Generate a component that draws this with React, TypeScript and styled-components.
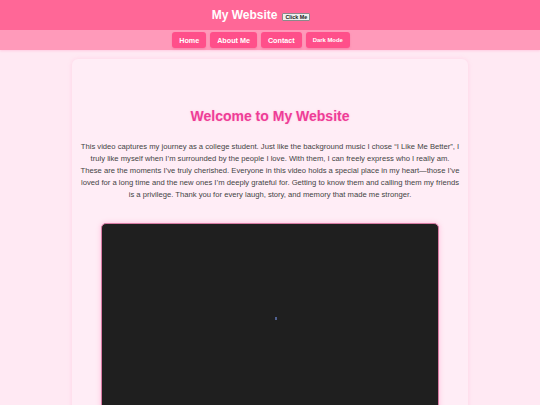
import React from "react";
import styled, { createGlobalStyle } from "styled-components";

const GlobalStyle = createGlobalStyle`
  html, body {
    margin: 0;
    padding: 0;
  }
  body {
    background-color: #ffe9f3;
    font-family: "Liberation Sans", Arial, sans-serif;
  }
`;

const Header = styled.header`
  height: 30px;
  background-color: #ff6797;
  display: flex;
  align-items: center;
  justify-content: center;
  gap: 5px;
  padding-right: 18px;
`;

const Title = styled.h1`
  margin: 0;
  font-size: 12px;
  line-height: 1;
  font-weight: bold;
  color: #fff;
`;

const SmallButton = styled.button`
  margin-top: 3px;
  font-family: "Liberation Sans", Arial, sans-serif;
  font-size: 5.4px;
  font-weight: bold;
  line-height: 6px;
  padding: 0 2px;
  background: #efefef;
  color: #222;
  border: 1px solid #8a8a8a;
  border-radius: 1px;
`;

const Nav = styled.nav`
  height: 20px;
  background-color: #ff9aba;
  display: flex;
  align-items: center;
  justify-content: center;
  gap: 4px;
  padding-right: 18px;
  box-shadow: 0 1px 2px rgba(255, 150, 190, 0.35);
`;

const NavButton = styled.button<{ $small?: boolean }>`
  height: 16px;
  padding: 0 7px;
  border: none;
  border-radius: 3px;
  background-color: #ff4f8a;
  color: #fff;
  font-family: "Liberation Sans", Arial, sans-serif;
  font-weight: bold;
  font-size: ${({ $small }) => ($small ? "5.9px" : "7.2px")};
  box-shadow: 0 1px 2px rgba(220, 60, 120, 0.25);
`;

const Container = styled.main`
  width: 396px;
  box-sizing: border-box;
  margin: 9px auto 0;
  padding: 49px 8px 40px;
  background-color: #ffedf6;
  border-radius: 6px;
  box-shadow: 0 0 4px rgba(255, 170, 205, 0.35);
`;

const Heading = styled.h2`
  margin: 0;
  font-size: 14px;
  line-height: 17px;
  font-weight: bold;
  text-align: center;
  color: #ee3d97;
  text-shadow: 0 0 2px rgba(255, 120, 180, 0.35);
`;

const Intro = styled.p`
  margin: 15.6px 0 0;
  font-size: 7.65px;
  line-height: 12.2px;
  text-align: center;
  color: #444;
`;

const VideoFrame = styled.div`
  position: relative;
  width: 338px;
  height: 190px;
  box-sizing: border-box;
  margin: 21px auto 0;
  background-color: #1f1f1f;
  border: 1px solid #d77aa3;
  border-radius: 5px;
  box-shadow: 0 0 5px rgba(255, 130, 185, 0.45);
`;

const Dot = styled.span`
  position: absolute;
  left: 173px;
  top: 93px;
  width: 2px;
  height: 3px;
  background-color: #4f5f8f;
`;

export default function App() {
  return (
    <>
      <GlobalStyle />
      <Header>
        <Title>My Website</Title>
        <SmallButton>Click Me</SmallButton>
      </Header>
      <Nav>
        <NavButton>Home</NavButton>
        <NavButton>About Me</NavButton>
        <NavButton>Contact</NavButton>
        <NavButton $small>Dark Mode</NavButton>
      </Nav>
      <Container>
        <Heading>Welcome to My Website</Heading>
        <Intro>
          This video captures my journey as a college student. Just like the
          background music I chose “I Like Me Better”, I truly like myself when
          I’m surrounded by the people I love. With them, I can freely express
          who I really am. These are the moments I’ve truly cherished. Everyone
          in this video holds a special place in my heart—those I’ve loved for a
          long time and the new ones I’m deeply grateful for. Getting to know
          them and calling them my friends is a privilege. Thank you for every
          laugh, story, and memory that made me stronger.
        </Intro>
        <VideoFrame>
          <Dot />
        </VideoFrame>
      </Container>
    </>
  );
}
